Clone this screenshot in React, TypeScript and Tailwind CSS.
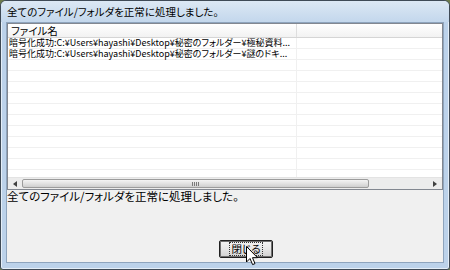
import React from 'react';

const FONT = "font-['Meiryo_UI','Noto_Sans_CJK_JP',sans-serif] [font-feature-settings:'palt']";

const rows = [
  '暗号化成功:C:¥Users¥hayashi¥Desktop¥秘密のフォルダー¥極秘資料...',
  '暗号化成功:C:¥Users¥hayashi¥Desktop¥秘密のフォルダー¥謎のドキ...',
];

const emptyRows = Array.from({ length: 11 });

const Cursor: React.FC = () => (
  <svg className="absolute left-[246px] top-[246px]" width="13" height="20" viewBox="0 0 13 20">
    <path
      d="M0.5 0.5 L0.5 16 L4 12.5 L6.6 18.6 L9 17.6 L6.5 11.7 L11.5 11.7 Z"
      fill="#ffffff"
      stroke="#000000"
      strokeWidth="1"
      strokeLinejoin="miter"
    />
  </svg>
);

const ScrollBar: React.FC = () => (
  <div className="flex h-[12px] bg-[#ececec] border-t border-[#e3e3e3]">
    <div className="w-[14px] flex items-center justify-center">
      <svg width="4" height="6" viewBox="0 0 4 6">
        <path d="M4 0 L0 3 L4 6 Z" fill="#404040" />
      </svg>
    </div>
    <div className="w-[347px] my-[1px] rounded-[2px] border border-[#9c9c9c] bg-gradient-to-b from-[#f4f4f4] via-[#e2e2e2] to-[#cfcfcf] flex items-center justify-center">
      <div className="flex gap-[1px]">
        <div className="w-[1px] h-[4px] bg-[#7a7a7a]" />
        <div className="w-[1px] h-[4px] bg-[#7a7a7a]" />
        <div className="w-[1px] h-[4px] bg-[#7a7a7a]" />
        <div className="w-[1px] h-[4px] bg-[#7a7a7a]" />
      </div>
    </div>
    <div className="flex-1" />
    <div className="w-[14px] flex items-center justify-center">
      <svg width="4" height="6" viewBox="0 0 4 6">
        <path d="M0 0 L4 3 L0 6 Z" fill="#404040" />
      </svg>
    </div>
  </div>
);

const App: React.FC = () => {
  return (
    <div className={`relative w-[450px] h-[270px] bg-[#6c7b4c] overflow-hidden ${FONT}`}>
      <div className="flex flex-col w-full h-full rounded-t-[6px] rounded-b-[3px] border border-[#3f4a56] bg-[#bcd2ea] shadow-[inset_0_0_0_1px_#e4eef8]">
        {/* title bar */}
        <div className="h-[21px] shrink-0 flex items-center pl-[6px] pt-[1px] bg-gradient-to-b from-[#dce8f4] to-[#c3d7ec] rounded-t-[5px] text-[10.5px] text-black">
          全てのファイル/フォルダを正常に処理しました。
        </div>

        {/* client */}
        <div className="flex-1 flex flex-col mx-[5px] mb-[6px] bg-[#f0f0f0] border border-[#8ea4bd]">
          <div className="h-[167px] shrink-0 flex flex-col border border-[#828790] bg-white overflow-hidden">
            <div className="flex h-[14px] shrink-0 border-b border-[#d5d5d5] bg-gradient-to-b from-[#ffffff] to-[#f2f2f2] text-[10.5px] leading-[14px] text-black">
              <div className="w-[289px] pl-[3px] border-r border-[#dedede]">ファイル名</div>
              <div className="flex-1" />
            </div>
            <div className="flex-1 overflow-hidden">
              {rows.map((r) => (
                <div key={r} className="flex h-[11px] border-b border-[#f0f0f0] text-[9px] leading-[10px] text-black">
                  <div className="w-[289px] pl-[1px] border-r border-[#f0f0f0] whitespace-nowrap">
                    {r}
                  </div>
                  <div className="flex-1" />
                </div>
              ))}
              {emptyRows.map((_, i) => (
                <div key={i} className="flex h-[11px] border-b border-[#f0f0f0]">
                  <div className="w-[289px] border-r border-[#f0f0f0]" />
                  <div className="flex-1" />
                </div>
              ))}
            </div>
            <ScrollBar />
          </div>

          <div className="text-[11.5px] leading-[13px] text-black whitespace-nowrap">
            全てのファイル/フォルダを正常に処理しました。
          </div>

          <div className="mt-auto mb-[4px] ml-[212px]">
            <button className="w-[54px] h-[18px] border border-[#202020] rounded-[2px] p-0 bg-transparent">
              <div className="w-full h-full border border-[#707070] bg-gradient-to-b from-[#f2f2f2] via-[#e6e6e6] to-[#d4d4d4] flex items-center justify-center">
                <span className="text-[10.5px] leading-[12px] text-black outline-1 outline-dotted outline-[#333] px-[1px]">
                  閉じる
                </span>
              </div>
            </button>
          </div>
        </div>
      </div>
      <Cursor />
    </div>
  );
};

export default App;
